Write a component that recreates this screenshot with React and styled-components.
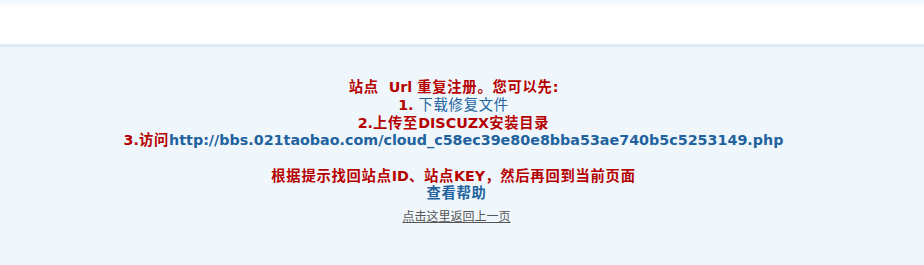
import React from "react";
import styled, { createGlobalStyle } from "styled-components";

const Global = createGlobalStyle`
  html, body { margin: 0; padding: 0; background: #f0f7fc; }
  body { font-family: "DejaVu Sans", Verdana, "Noto Sans CJK SC", sans-serif; }
`;

const Header = styled.div`
  height: 44px;
  background: linear-gradient(#eef6fd 0px, #ffffff 8px, #ffffff 100%);
  border-bottom: 3px solid #deeaf5;
`;

const Main = styled.div`
  padding: 32px 17px 0 0;
  text-align: center;
  font-family: "DejaVu Sans", Verdana, "Noto Sans CJK SC", sans-serif;
`;

const Message = styled.p`
  margin: 0;
  font-size: 14.3px;
  font-weight: bold;
  line-height: 17.75px;
  color: #b50000;
`;

const Han = styled.span`
  letter-spacing: 0.75px;
`;

const Link = styled.a`
  color: #22639f;
  text-decoration: none;
  font-weight: ${(p) => (p.$bold ? "bold" : "normal")};
`;

const Help = styled.a`
  display: block;
  padding-left: 6px;
  font-size: 14.3px;
  font-weight: bold;
  line-height: 14px;
  letter-spacing: 0.75px;
  color: #22639f;
  text-decoration: none;
`;

const Back = styled.p`
  margin: 8px 0 0;
  padding-left: 6px;
  font-size: 12px;
  line-height: 16px;
  a {
    color: #555;
    text-decoration: underline;
    font-family: "Noto Sans CJK SC", sans-serif;
  }
`;

export default function App() {
  return (
    <>
      <Global />
      <Header />
      <Main>
        <Message>
          <Han>站点</Han>&nbsp; Url <Han>重复注册。您可以先</Han>:
          <br />
          1. <Link href="#"><Han>下载修复文件</Han></Link>
          <br />
          2.<Han>上传至</Han>DISCUZX<Han>安装目录</Han>
          <br />
          3.<Han>访问</Han><Link $bold href="#">http://bbs.021taobao.com/cloud_c58ec39e80e8bba53ae740b5c5253149.php</Link>
          <br />
          <br />
          <Han>根据提示找回站点</Han>ID<Han>、站点</Han>KEY<Han>，然后再回到当前页面</Han>
        </Message>
        <Help href="#">查看帮助</Help>
        <Back>
          <a href="#">点击这里返回上一页</a>
        </Back>
      </Main>
    </>
  );
}
